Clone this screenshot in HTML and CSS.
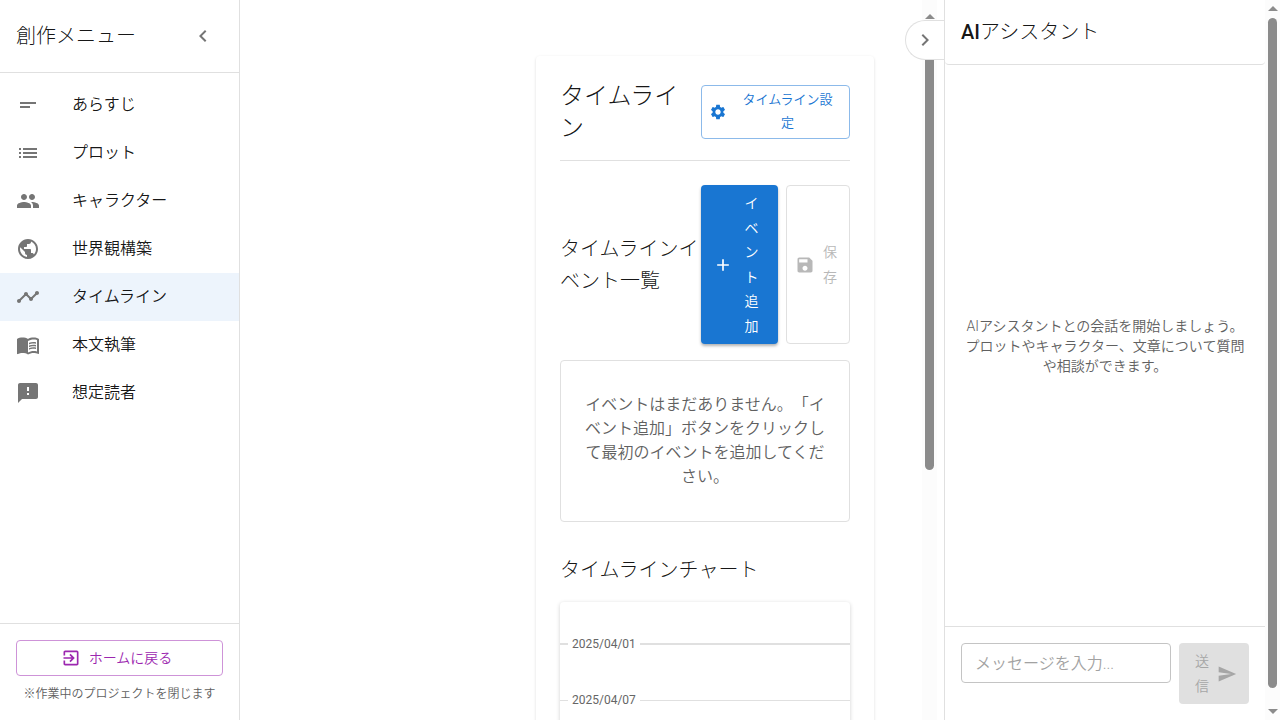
FILE: index.html
```html
<!DOCTYPE html>
<html lang="ja">
<head>
<meta charset="utf-8">
<title>タイムライン</title>
<link rel="stylesheet" href="styles.css">
</head>
<body>
<div class="app">
  <nav class="sidebar">
    <header class="sidebar-header">
      <h2 class="heading">創作メニュー</h2>
      <button class="icon-button" aria-label="メニューを閉じる"><svg class="icon" viewBox="0 0 24 24"><path d="M15.41 7.41 14 6l-6 6 6 6 1.41-1.41L10.83 12z"/></svg></button>
    </header>
    <ul class="menu">
      <li><a class="menu-item" href="#"><svg class="icon" viewBox="0 0 24 24"><path d="M4 9h16v2H4zm0 4h10v2H4z"/></svg><span>あらすじ</span></a></li>
      <li><a class="menu-item" href="#"><svg class="icon" viewBox="0 0 24 24"><path d="M3 13h2v-2H3zm0 4h2v-2H3zm0-8h2V7H3zm4 4h14v-2H7zm0 4h14v-2H7zM7 7v2h14V7z"/></svg><span>プロット</span></a></li>
      <li><a class="menu-item" href="#"><svg class="icon" viewBox="0 0 24 24"><path d="M16 11c1.66 0 2.99-1.34 2.99-3S17.66 5 16 5s-3 1.34-3 3 1.34 3 3 3m-8 0c1.66 0 2.99-1.34 2.99-3S9.66 5 8 5 5 6.340 5 8s1.34 3 3 3m0 2c-2.330 0-7 1.170-7 3.500V19h14v-2.500c0-2.330-4.670-3.500-7-3.500m8 0c-.29 0-.62.02-.97.05 1.160.84 1.970 1.970 1.970 3.450V19h6v-2.500c0-2.330-4.670-3.500-7-3.500"/></svg><span>キャラクター</span></a></li>
      <li><a class="menu-item" href="#"><svg class="icon" viewBox="0 0 24 24"><path d="M12 2C6.48 2 2 6.480 2 12s4.480 10 10 10 10-4.480 10-10S17.520 2 12 2m-1 17.930c-3.950-.49-7-3.850-7-7.930 0-.62.08-1.210.21-1.790L9 15v1c0 1.100.9 2 2 2zm6.900-2.540c-.26-.81-1-1.390-1.900-1.390h-1v-3c0-.55-.45-1-1-1H8v-2h2c.55 0 1-.45 1-1V7h2c1.100 0 2-.9 2-2v-.41c2.930 1.190 5 4.060 5 7.410 0 2.080-.8 3.970-2.100 5.390"/></svg><span>世界観構築</span></a></li>
      <li><a class="menu-item selected" href="#" aria-current="page"><svg class="icon" viewBox="0 0 24 24"><path d="M23 8c0 1.100-.9 2-2 2-.18 0-.35-.02-.51-.07l-3.560 3.550c.05.16.07.34.07.52 0 1.100-.9 2-2 2s-2-.9-2-2c0-.18.02-.36.07-.52l-2.550-2.550c-.16.05-.34.07-.52.07s-.36-.02-.52-.07l-4.550 4.560c.05.16.07.33.07.51 0 1.100-.9 2-2 2s-2-.9-2-2 .9-2 2-2c.18 0 .35.02.51.07l4.560-4.550C8.020 9.360 8 9.180 8 9c0-1.100.9-2 2-2s2 .9 2 2c0 .18-.02.36-.07.52l2.550 2.550c.16-.05.34-.07.52-.07s.36.02.52.07l3.550-3.560C19.020 8.350 19 8.180 19 8c0-1.100.9-2 2-2s2 .9 2 2"/></svg><span>タイムライン</span></a></li>
      <li><a class="menu-item" href="#"><svg class="icon" viewBox="0 0 24 24"><path d="M21 5c-1.110-.35-2.330-.5-3.500-.5-1.950 0-4.050.4-5.500 1.500-1.450-1.100-3.550-1.500-5.500-1.500S2.450 4.900 1 6v14.650c0 .25.25.5.5.5.1 0 .15-.05.25-.05C3.100 20.450 5.050 20 6.500 20c1.950 0 4.050.4 5.500 1.500 1.350-.85 3.800-1.500 5.500-1.500 1.650 0 3.350.3 4.750 1.050.1.05.15.05.25.05.25 0 .5-.25.5-.5V6c-.6-.45-1.250-.75-2-1m0 13.500c-1.100-.35-2.300-.5-3.500-.5-1.700 0-4.150.65-5.500 1.500V8c1.350-.85 3.800-1.500 5.500-1.500 1.200 0 2.400.15 3.500.5z"/><path d="M17.500 10.500c.88 0 1.730.09 2.500.26V9.240c-.79-.15-1.640-.24-2.500-.24-1.700 0-3.240.29-4.500.83v1.660c1.130-.64 2.700-.99 4.500-.99M13 12.490v1.660c1.130-.64 2.700-.99 4.500-.99.88 0 1.730.09 2.500.26V11.900c-.79-.15-1.640-.24-2.500-.24-1.700 0-3.240.3-4.500.83m4.500 1.840c-1.700 0-3.240.29-4.500.83v1.660c1.130-.64 2.700-.99 4.500-.99.88 0 1.730.09 2.500.26v-1.520c-.79-.16-1.640-.24-2.500-.24"/></svg><span>本文執筆</span></a></li>
      <li><a class="menu-item" href="#"><svg class="icon" viewBox="0 0 24 24"><path d="M20 2H4c-1.100 0-1.990.9-1.990 2L2 22l4-4h14c1.100 0 2-.9 2-2V4c0-1.100-.9-2-2-2m-7 12h-2v-2h2zm0-4h-2V6h2z"/></svg><span>想定読者</span></a></li>
    </ul>
    <footer class="sidebar-footer">
      <button class="button home"><svg class="icon" viewBox="0 0 24 24"><path d="M10.090 15.590 11.500 17l5-5-5-5-1.410 1.410L12.670 11H3v2h9.670zM19 3H5c-1.110 0-2 .9-2 2v4h2V5h14v14H5v-4H3v4c0 1.100.89 2 2 2h14c1.100 0 2-.9 2-2V5c0-1.100-.9-2-2-2"/></svg><span>ホームに戻る</span></button>
      <p class="note">※作業中のプロジェクトを閉じます</p>
    </footer>
  </nav>

  <div class="workspace">
    <main class="content">
      <section class="card">
        <header class="card-header">
          <h1 class="title">タイムライン</h1>
          <button class="button settings"><svg class="icon" viewBox="0 0 24 24"><path d="M19.140 12.940c.04-.3.060-.61.060-.94 0-.32-.02-.64-.07-.94l2.030-1.580c.18-.14.23-.41.12-.61l-1.920-3.320c-.12-.22-.37-.29-.59-.22l-2.390.96c-.5-.38-1.030-.7-1.620-.94l-.36-2.540c-.04-.24-.24-.41-.48-.41h-3.840c-.24 0-.43.17-.47.41l-.36 2.540c-.59.24-1.130.57-1.620.94l-2.390-.96c-.22-.08-.47 0-.59.22L2.740 8.870c-.12.21-.08.47.12.61l2.030 1.580c-.05.3-.09.63-.09.94s.02.64.07.94l-2.030 1.580c-.18.14-.23.41-.12.61l1.920 3.320c.12.22.37.29.59.22l2.390-.96c.5.38 1.030.7 1.620.94l.36 2.540c.05.24.24.41.48.41h3.840c.24 0 .44-.17.47-.41l.36-2.540c.59-.24 1.130-.56 1.620-.94l2.390.96c.22.08.47 0 .59-.22l1.920-3.320c.12-.22.070-.47-.12-.61zM12 15.600c-1.980 0-3.600-1.620-3.600-3.600s1.620-3.600 3.600-3.600 3.600 1.620 3.600 3.600-1.620 3.600-3.600 3.600"/></svg><span>タイムライン設定</span></button>
        </header>
        <div class="events-header">
          <h2 class="heading">タイムラインイベント一覧</h2>
          <div class="actions">
            <button class="button add"><svg class="icon" viewBox="0 0 24 24"><path d="M19 13h-6v6h-2v-6H5v-2h6V5h2v6h6z"/></svg><span>イベント追加</span></button>
            <button class="button save" disabled><svg class="icon" viewBox="0 0 24 24"><path d="M17 3H5c-1.110 0-2 .9-2 2v14c0 1.100.89 2 2 2h14c1.100 0 2-.9 2-2V7zm-5 16c-1.660 0-3-1.340-3-3s1.340-3 3-3 3 1.340 3 3-1.340 3-3 3m3-10H5V5h10z"/></svg><span>保存</span></button>
          </div>
        </div>
        <p class="empty">イベントはまだありません。「イベント追加」ボタンをクリックして最初のイベントを追加してください。</p>
        <h2 class="heading">タイムラインチャート</h2>
        <div class="chart">
          <div class="tick major"><time>2025/04/01</time></div>
          <div class="tick"><time>2025/04/07</time></div>
        </div>
      </section>
    </main>
    <div class="scrollbar inner"><i class="arrow up"></i><i class="thumb"></i></div>
    <button class="panel-toggle" aria-label="パネルを閉じる"><svg class="icon" viewBox="0 0 24 24"><path d="M10 6 8.590 7.410 13.170 12l-4.580 4.590L10 18l6-6z"/></svg></button>
  </div>

  <aside class="assistant">
    <header class="assistant-header"><h2 class="heading"><span class="strong">AI</span>アシスタント</h2></header>
    <div class="conversation"><p>AIアシスタントとの会話を開始しましょう。プロットやキャラクター、文章について質問や相談ができます。</p></div>
    <form class="composer">
      <input class="message" type="text" placeholder="メッセージを入力..." aria-label="メッセージ">
      <button class="button send" disabled><span>送信</span><svg class="icon" viewBox="0 0 24 24"><path d="M2.010 21 23 12 2.010 3 2 10l15 2-15 2z"/></svg></button>
    </form>
  </aside>
  <div class="scrollbar"><i class="arrow up"></i><i class="thumb"></i><i class="arrow down"></i></div>
</div>
</body>
</html>
```
FILE: styles.css
```css
* { box-sizing: border-box; }

body {
  margin: 0;
  background: #fff;
  color: rgba(0, 0, 0, 0.92);
  font: 16px/24px Roboto, "Liberation Sans", "Noto Sans CJK JP", sans-serif;
  font-weight: 350;
  text-spacing-trim: space-all;
}

h1, h2, p, ul { margin: 0; padding: 0; font-weight: inherit; }
ul { list-style: none; }
button, input { font: inherit; color: inherit; }

.icon { width: 24px; height: 24px; flex: none; fill: currentColor; display: block; }
.heading { font-size: 20px; line-height: 32px; font-weight: 300; }
.strong { font-weight: 500; }
.title { font-size: 24px; line-height: 32px; font-weight: 300; }

.app { display: flex; height: 100vh; overflow: hidden; }

.sidebar {
  width: 240px;
  flex: none;
  display: flex;
  flex-direction: column;
  border-right: 1px solid #e0e0e0;
}
.sidebar-header {
  display: flex;
  align-items: center;
  justify-content: space-between;
  padding: 16px;
  border-bottom: 1px solid #e0e0e0;
}
.icon-button {
  display: flex;
  padding: 8px;
  border: 0;
  background: none;
  color: #757575;
}
.menu { flex: 1; padding: 8px 0; }
.menu-item {
  display: flex;
  align-items: center;
  gap: 32px;
  padding: 12px 16px;
  color: inherit;
  text-decoration: none;
}
.menu-item .icon { color: #757575; }
.selected { background: #edf4fc; }
.sidebar-footer { padding: 16px; border-top: 1px solid #e0e0e0; text-align: center; }
.note { margin-top: 8px; font-size: 12px; line-height: 20px; color: #606060; white-space: nowrap; }

.button {
  display: flex;
  align-items: center;
  justify-content: center;
  gap: 8px;
  padding: 6px 16px;
  border: 1px solid transparent;
  border-radius: 4px;
  background: none;
  font-size: 14px;
  line-height: 1.75;
}
.button .icon { width: 20px; height: 20px; }
.home { width: 100%; height: 36px; padding-right: 22px; border-color: #ce93d8; color: #9c27b0; }

.workspace { flex: 1; min-width: 0; display: flex; position: relative; padding-right: 7px; }
.content { flex: 1; min-width: 0; padding: 56px 48px 0 296px; overflow: hidden; }
.card {
  padding: 24px;
  border-radius: 4px;
  box-shadow: 0 1px 3px rgba(0, 0, 0, 0.14);
}
.card-header {
  display: flex;
  align-items: center;
  justify-content: space-between;
  margin-bottom: 24px;
  padding-bottom: 16px;
  border-bottom: 1px solid #e0e0e0;
}
.title { flex: 1; }
.settings { width: 149px; flex: none; padding: 3px 10px 3px 7px; border-color: #8cbaea; color: #1976d2; font-size: 13px; }
.settings .icon { width: 18px; height: 18px; margin-right: 1px; }
.settings span { flex: 1; }

.events-header { display: flex; align-items: center; margin-bottom: 16px; }
.events-header .heading { flex: 1; }
.actions { display: flex; align-items: stretch; gap: 8px; width: 149px; flex: none; }
.add {
  flex: 1;
  padding: 5px 15px 5px 11px;
  background: #1976d2;
  color: #fff;
  box-shadow: 0 2px 3px rgba(0, 0, 0, 0.3);
}
.save { width: 64px; padding: 5px 12px 5px 8px; border-color: #e0e0e0; color: #b8b8b8; }
.empty {
  margin-bottom: 32px;
  padding: 32px 23px;
  border: 1px solid #e0e0e0;
  border-radius: 4px;
  color: #606060;
  text-align: center;
}
.chart {
  margin-top: 16px;
  padding: 14px 0 48px;
  border-radius: 4px;
  box-shadow: 0 1px 4px rgba(0, 0, 0, 0.18);
}
.tick {
  display: flex;
  align-items: center;
  height: 56px;
  font-size: 12px;
  font-weight: 400;
  line-height: 20px;
  color: #666;
}
.tick::before, .tick::after { content: ""; height: 1px; background: #e0e0e0; }
.tick::before { width: 8px; }
.tick::after { flex: 1; }
.major::before, .major::after { height: 2px; }
.tick time { padding: 0 4px; }

.panel-toggle {
  position: absolute;
  top: 20px;
  right: 0;
  width: 39px;
  height: 40px;
  padding: 0 7px;
  border: 1px solid #e0e0e0;
  border-right: 0;
  border-radius: 20px 0 0 20px;
  background: #fff;
  color: #757575;
}

.scrollbar {
  width: 15px;
  flex: none;
  display: flex;
  flex-direction: column;
  align-items: center;
  padding: 6px 0;
  background: #fcfcfc;
}
.thumb { width: 9px; flex: 1; margin: 7px 0 21px; border-radius: 5px; background: #8b8b8b; }
.arrow { border: 5px solid transparent; }
.up { border-top: 0; border-bottom-color: #8b8b8b; }
.down { border-bottom: 0; border-top-color: #8b8b8b; }
.inner { padding-top: 14px; }
.inner .thumb { flex: none; height: 444px; }

.assistant {
  width: 321px;
  flex: none;
  display: flex;
  flex-direction: column;
  border-left: 1px solid #e0e0e0;
}
.assistant-header {
  padding: 16px;
  border-bottom: 1px solid #e0e0e0;
  border-radius: 4px;
}
.conversation {
  flex: 1;
  display: flex;
  align-items: center;
  padding: 0 16px;
  color: #606060;
  font-size: 14px;
  line-height: 20px;
  text-align: center;
}
.composer { display: flex; align-items: flex-start; gap: 8px; padding: 16px; border-top: 1px solid #e0e0e0; }
.message {
  flex: 1;
  min-width: 0;
  height: 40px;
  padding: 8px 13px;
  border: 1px solid #c4c4c4;
  border-radius: 4px;
  background: #fff;
}
.message::placeholder { color: #a2a2a2; opacity: 1; }
.send { width: 70px; padding: 5px 11px 5px 15px; background: #e0e0e0; color: #a6a6a6; }
```
